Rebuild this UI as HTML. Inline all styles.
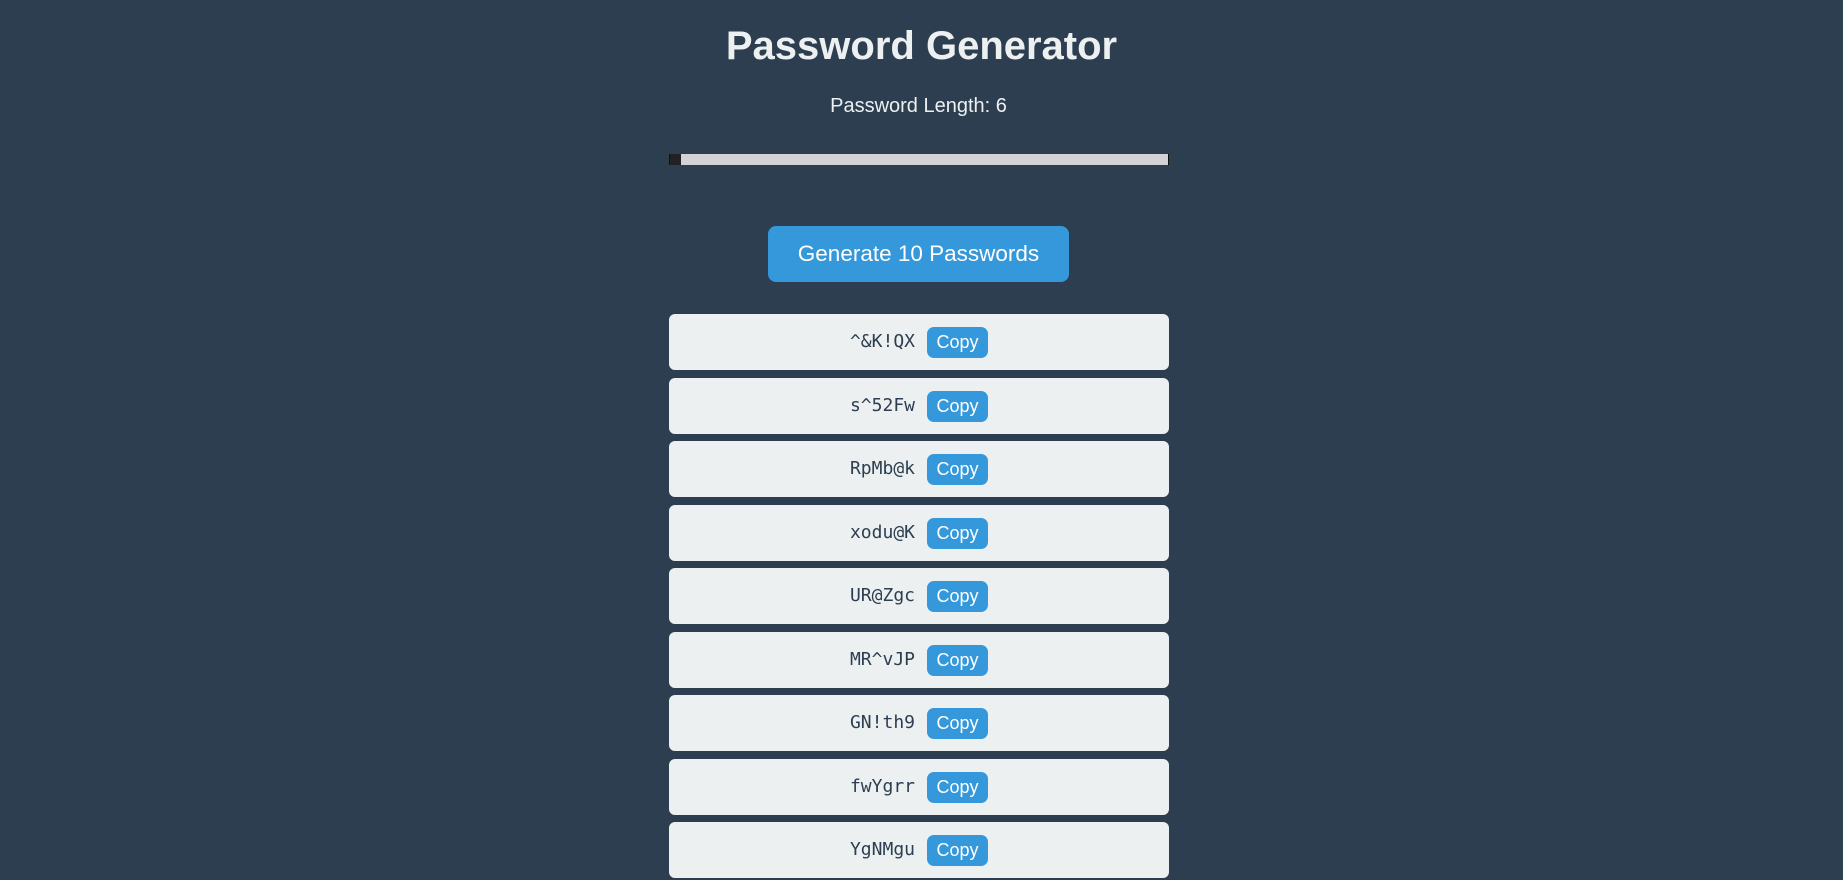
<!DOCTYPE html>
<html><head><style>
body{margin:0;width:1843px;height:880px;background:#2d3e50;font-family:"Liberation Sans",sans-serif;position:relative;overflow:hidden}
h1{position:absolute;top:24px;left:0;width:1843px;text-align:center;margin:0;font-size:40px;color:#ecf0f1;font-weight:bold}
.len{position:absolute;top:95px;left:-3px;width:1843px;text-align:center;color:#ecf0f1;font-size:20px}
.track{position:absolute;left:669px;top:154px;width:500px;height:11px;background:#d3d3d3;border-left:1px solid #111;border-right:1px solid #111;box-sizing:border-box}
.thumb{position:absolute;left:0;top:0;width:11px;height:11px;background:#222}
.gen{position:absolute;left:768px;top:226px;width:301px;height:56px;background:#3498db;border-radius:8px;color:#fff;font-size:22.5px;text-align:center;line-height:55px}
.card{position:absolute;left:669px;width:500px;height:56px;background:#ecf0f1;border-radius:6px}
.pw{position:absolute;right:254px;top:0;line-height:56px;font-family:"DejaVu Sans Mono","Liberation Mono",monospace;font-size:18px;color:#2c3e50}
.cp{position:absolute;left:258px;top:13px;width:61px;height:31px;background:#3498db;border-radius:7px;color:#fff;font-size:18px;text-align:center;line-height:30px}
</style></head><body>
<h1>Password Generator</h1>
<div class="len">Password Length: 6</div>
<div class="track"><div class="thumb"></div></div>
<div class="gen">Generate 10 Passwords</div>
<div class="card" style="top:314px"><span class="pw">^&amp;K!QX</span><div class="cp">Copy</div></div>
<div class="card" style="top:377.5px"><span class="pw">s^52Fw</span><div class="cp">Copy</div></div>
<div class="card" style="top:441px"><span class="pw">RpMb@k</span><div class="cp">Copy</div></div>
<div class="card" style="top:504.5px"><span class="pw">xodu@K</span><div class="cp">Copy</div></div>
<div class="card" style="top:568px"><span class="pw">UR@Zgc</span><div class="cp">Copy</div></div>
<div class="card" style="top:631.5px"><span class="pw">MR^vJP</span><div class="cp">Copy</div></div>
<div class="card" style="top:695px"><span class="pw">GN!th9</span><div class="cp">Copy</div></div>
<div class="card" style="top:758.5px"><span class="pw">fwYgrr</span><div class="cp">Copy</div></div>
<div class="card" style="top:822px"><span class="pw">YgNMgu</span><div class="cp">Copy</div></div>
</body></html>
